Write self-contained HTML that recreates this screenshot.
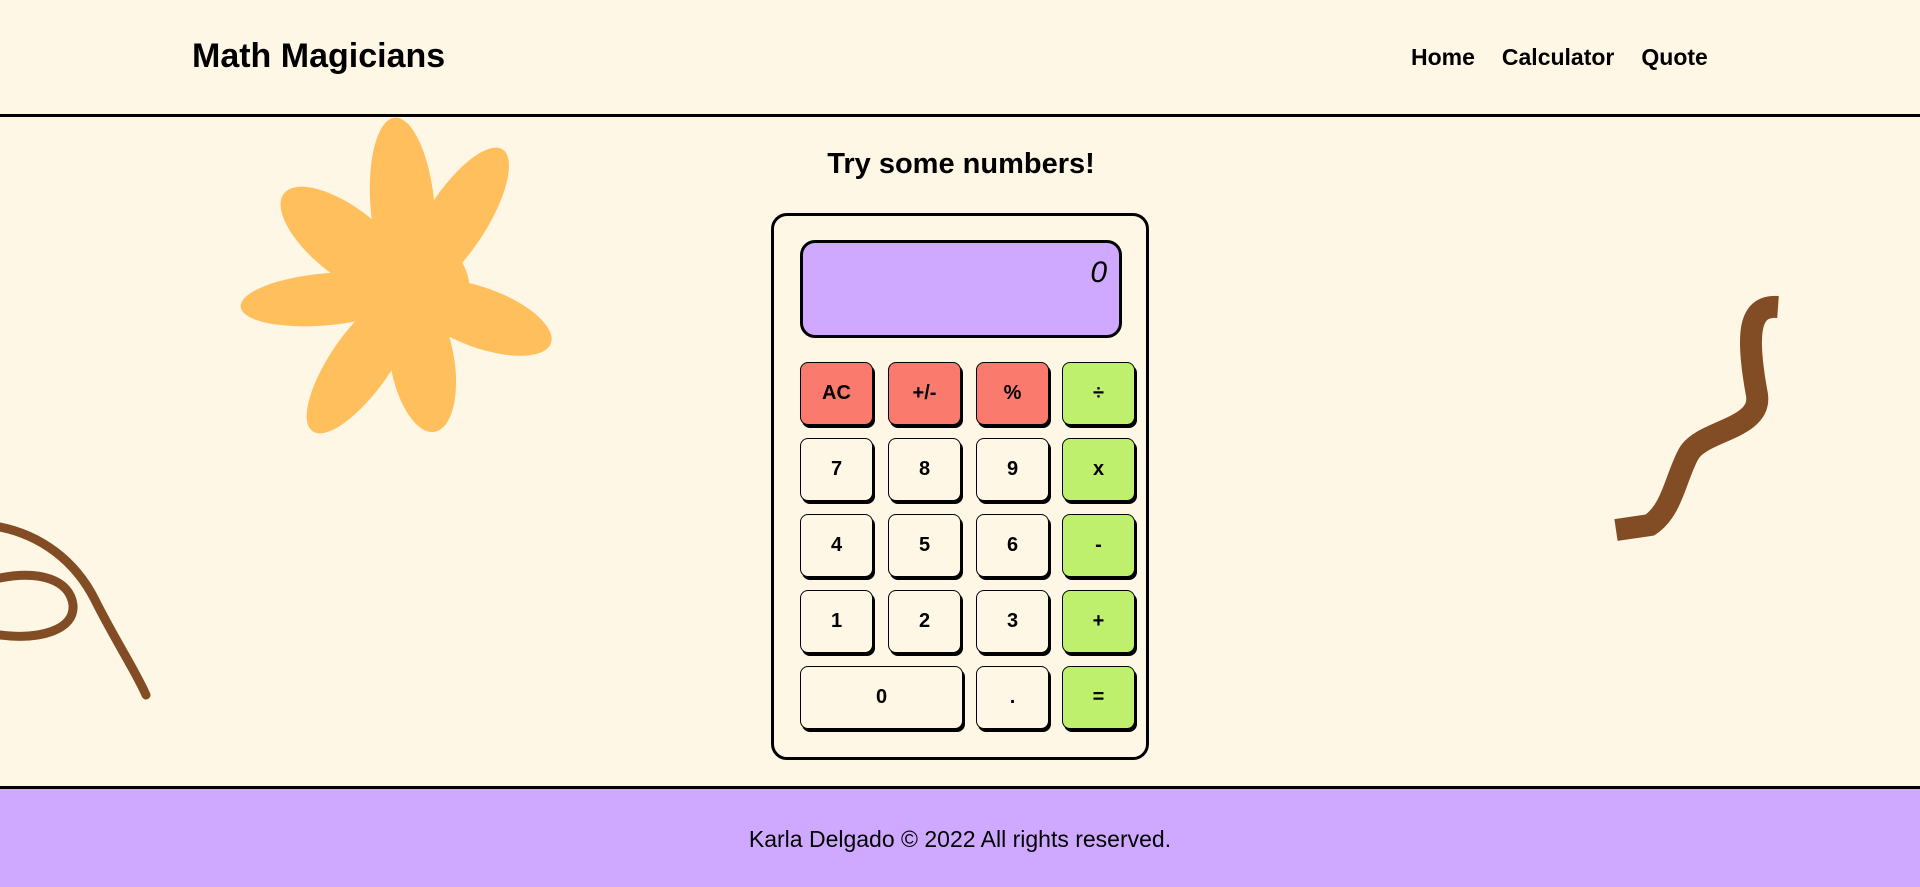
<!DOCTYPE html>
<html><head><meta charset="utf-8"><style>
*{margin:0;padding:0;box-sizing:border-box}
body{width:1920px;height:887px;overflow:hidden;background:#fff7e6;font-family:"Liberation Sans",sans-serif;color:#000;position:relative}
header{position:absolute;left:0;top:0;width:1920px;height:117px;border-bottom:3px solid #000}
.logo{position:absolute;left:192px;top:37px;font-size:34px;font-weight:bold}
nav{position:absolute;top:44px;left:1411px;font-size:23px;font-weight:bold}
nav span{margin-right:27px}
h2{position:absolute;top:148px;left:0;width:1922px;text-align:center;font-size:29px;font-weight:bold}
.calc{position:absolute;left:771px;top:213px;width:378px;height:547px;border:3px solid #000;border-radius:16px}
.disp{position:absolute;left:800px;top:240px;width:322px;height:98px;background:#cfa8ff;border:3px solid #000;border-radius:15px;text-align:right;padding:13px 12px 0 0;font-size:30px;font-style:italic}
.b{position:absolute;width:73px;height:63px;border:1.5px solid #000;border-radius:8px;box-shadow:2px 3px 0 #000;display:flex;align-items:center;justify-content:center;font-size:20px;font-weight:bold;background:#fff7e6}
.r{background:#fa7a6e}.g{background:#bef06e}
footer{position:absolute;left:0;top:786px;width:1920px;height:101px;background:#cfa8ff;border-top:3px solid #000;text-align:center;font-size:23px;padding-top:37px}
svg{position:absolute;left:0;top:0}
</style></head><body>
<svg width="1920" height="887">
<g fill="#ffbf5c" transform="translate(410,292)">
<ellipse cx="0" cy="-85" rx="32" ry="90" transform="rotate(-5)"/>
<ellipse cx="0" cy="-85" rx="30" ry="85" transform="rotate(33)"/>
<ellipse cx="0" cy="-80" rx="34" ry="80" transform="rotate(-52)"/>
<ellipse cx="0" cy="-85" rx="26" ry="85" transform="rotate(-95)"/>
<ellipse cx="0" cy="-75" rx="30" ry="75" transform="rotate(110)"/>
<ellipse cx="0" cy="-70" rx="32" ry="72" transform="rotate(170)"/>
<ellipse cx="0" cy="-85" rx="30" ry="85" transform="rotate(-145)"/>
<circle r="60"/>
</g>
<g fill="none" stroke="#824c24" stroke-linecap="round">
<path d="M0,527 C40,535 75,560 95,600 C115,640 135,670 146,695" stroke-width="9"/>
<path d="M0,578 C40,570 70,580 73,605 C75,630 40,640 0,635" stroke-width="9"/>
<path d="M1778,307 C1750,305 1745,330 1757,395 C1762,430 1700,430 1688,455 C1675,480 1672,510 1650,525 L1616,530" stroke-width="22" stroke-linecap="butt"/>
</g>
</svg>
<header><div class="logo">Math Magicians</div><nav><span>Home</span><span>Calculator</span><span>Quote</span></nav></header>
<h2>Try some numbers!</h2>
<div class="calc"></div>
<div class="disp">0</div>
<div class="b r" style="left:800px;top:362px">AC</div>
<div class="b r" style="left:888px;top:362px">+/-</div>
<div class="b r" style="left:976px;top:362px">%</div>
<div class="b g" style="left:1062px;top:362px">÷</div>
<div class="b" style="left:800px;top:438px">7</div>
<div class="b" style="left:888px;top:438px">8</div>
<div class="b" style="left:976px;top:438px">9</div>
<div class="b g" style="left:1062px;top:438px">x</div>
<div class="b" style="left:800px;top:514px">4</div>
<div class="b" style="left:888px;top:514px">5</div>
<div class="b" style="left:976px;top:514px">6</div>
<div class="b g" style="left:1062px;top:514px">-</div>
<div class="b" style="left:800px;top:590px">1</div>
<div class="b" style="left:888px;top:590px">2</div>
<div class="b" style="left:976px;top:590px">3</div>
<div class="b g" style="left:1062px;top:590px">+</div>
<div class="b" style="left:800px;top:666px;width:163px">0</div>
<div class="b" style="left:976px;top:666px">.</div>
<div class="b g" style="left:1062px;top:666px">=</div>
<footer>Karla Delgado © 2022 All rights reserved.</footer>
</body></html>
